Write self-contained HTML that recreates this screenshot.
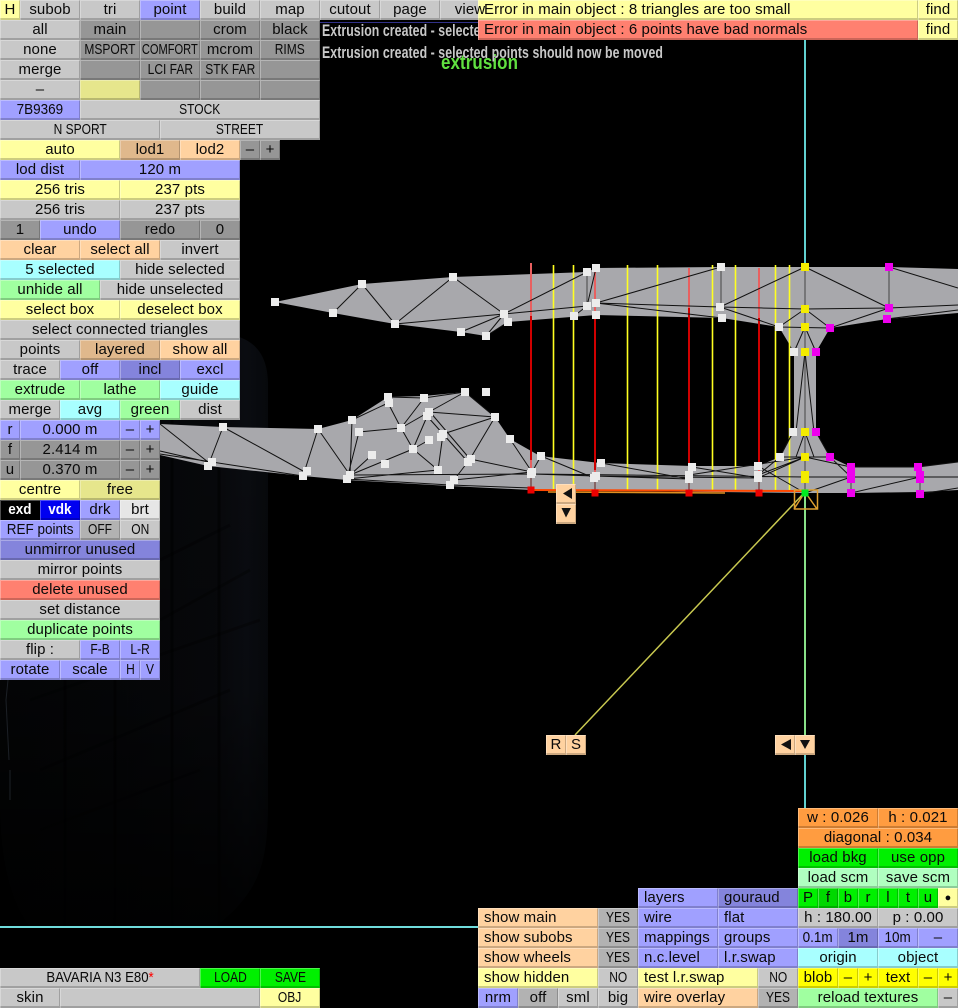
<!DOCTYPE html>
<html><head><meta charset="utf-8"><style>
html,body{margin:0;padding:0;background:#000;width:958px;height:1008px;overflow:hidden}
#w{position:relative;width:958px;height:1008px;overflow:hidden;background:#000;font:15px "Liberation Sans",sans-serif;letter-spacing:.1px;color:#0a0a0a;filter:blur(.35px)}
svg{position:absolute;left:0;top:0}
#w div{position:absolute;height:20px;line-height:20px;text-align:center;white-space:nowrap;box-sizing:border-box;box-shadow:inset 1px 1px 0 rgba(255,255,255,.3),inset -1px -2px 0 rgba(0,0,0,.2)}
#w div.l{text-align:left;padding-left:6px}
#w span.x{display:inline-block;transform:scaleX(.8);letter-spacing:0;margin:0 -12px}
#w span.z{display:inline-block;transform:scaleX(.9);letter-spacing:0;margin:0 -12px}
.g{background:#c8c8c8}.d{background:#969696}.b{background:#a0a0ff}.B{background:#8484dc}.y{background:#ffffa0}.k{background:#e6e68c}.p{background:#ffd2a0}.P{background:#e0b88c}.c{background:#a8ffff}.n{background:#a0ffa0}.r{background:#ff8070}.o{background:#ff9c40}.G{background:#00f000}.m{background:#b0ffc0}.Y{background:#ffff00}.s{background:#b2b2b2}
.v{background:#00d800}
</style></head><body><div id="w">
<svg width="958" height="1008" viewBox="0 0 958 1008">
<defs><linearGradient id="t" x1="0" x2="1" y1="0" y2="0"><stop offset="0" stop-color="#040506"/><stop offset=".45" stop-color="#050608"/><stop offset=".8" stop-color="#07080b"/><stop offset=".92" stop-color="#0a0c11"/><stop offset="1" stop-color="#07090c"/></linearGradient>
<linearGradient id="f" x1="0" x2="0" y1="0" y2="1"><stop offset="0" stop-color="#000" stop-opacity="0"/><stop offset=".6" stop-color="#000" stop-opacity=".1"/><stop offset=".9" stop-color="#000" stop-opacity=".7"/><stop offset="1" stop-color="#000" stop-opacity=".85"/></linearGradient></defs>
<path d="M0 335H232C255 340 268 355 268 385V800C268 860 262 890 215 927H30C10 900 0 860 0 800Z" fill="url(#t)"/>
<path d="M65 400V927M115 400V927M172 400V927M219 400V927" stroke="#000" stroke-width="3" opacity=".5"/>
<path d="M160 560L230 525M160 620L250 570M30 700L260 620M40 770L230 690M40 830L200 770" stroke="#000" stroke-width="3" opacity=".3"/>
<path d="M0 335H268V927H0Z" fill="url(#f)"/>
<path d="M10 660L6 700L9 760M10 770V800" stroke="#1c2026" fill="none"/>
<rect x="0" y="926" width="478" height="2" fill="#70dcdc"/>
<path d="M805 40V490" stroke="#60d0d0" stroke-width="2"/>
<path d="M805 495V735" stroke="#88e088" stroke-width="2"/>
<path d="M805 755V808" stroke="#60d0d0" stroke-width="2"/>
<path d="M805 492L575 735" stroke="#c8c850" stroke-width="1.5"/>
<rect x="320" y="22" width="158" height="1" fill="#303088"/>
<text x="441" y="69" textLength="77" lengthAdjust="spacingAndGlyphs" font-family="Liberation Sans" font-weight="bold" font-size="20" fill="#60e040">extrusion</text>
<text x="322" y="36" textLength="341" lengthAdjust="spacingAndGlyphs" font-family="Liberation Sans" font-weight="bold" font-size="17" fill="#c8c8c8">Extrusion created - selected points should now be moved</text>
<text x="322" y="58" textLength="341" lengthAdjust="spacingAndGlyphs" font-family="Liberation Sans" font-weight="bold" font-size="17" fill="#c8c8c8">Extrusion created - selected points should now be moved</text>
<!-- grey surfaces -->
<path d="M275 302L362 284L453 277L587 272L596 268L721 267L805 267L889 267L958 269V313L887 319L830 328L816 352L816 432L830 457L851 467L918 467L958 462V490L920 492L851 493L805 493L531 490L450 486L347 480L303 476L208 466L160 455V424L223 427L318 429L352 420L388 397L424 396L465 392L495 417L510 439L540 456L600 463L692 466L758 466L780 457L794 432L794 352L779 327L722 318L596 315L508 322L486 336L461 332L395 324L333 313Z" fill="#a8a8ac"/>
<!-- vertical guide lines -->
<path d="M531 263V490M595 268V493M689 268V493M759 268V493" stroke="#d00000" stroke-width="2"/>
<path d="M531 263V316M595 268V316M689 268V308M759 268V318M531 460V488M595 470V490M689 470V490M759 470V490" stroke="#e86060" stroke-width="2"/>
<path d="M553.5 265V490M573.5 265V490M627.5 265V490M657.5 265V490M712.5 265V490M735.5 265V490M775.5 265V490M789.5 265V490" stroke="#ffff20" stroke-width="1.6"/>
<!-- grey edges -->
<path d="M587 272V306M721 267V307M805 267V309M889 267V308M805 309V352M805 352V493M531 474V490M595 478V493M689 479V493M759 478V493M851 467V493M920 477V494" stroke="#666" stroke-width="1.500" fill="none"/>
<!-- black edges -->
<path d="M362 284L333 313M362 284L395 324M395 324L453 277M453 277L504 314M395 324L504 314M504 314L461 332M504 314L486 336M508 322L486 336M504 314L587 272M504 314L587 306M596 268L587 306M574 316L587 306M596 303L721 267M596 303L720 307M596 303L722 318M720 307L805 267M720 307L805 309M720 307L779 327M805 267L889 308M805 309L889 308M779 327L805 309M805 309L830 328M779 327L830 328M830 328L889 308M889 267L958 288M889 308L958 305M887 319L958 310M805 327L794 352M805 327L816 352M805 352L796 432M805 352L814 432M793 432L780 457M816 432L830 457M805 432L796 457M805 432L814 457M780 457L830 457" stroke="#111" fill="none"/>
<path d="M160 424L208 462M223 427L208 466M223 427L303 471M318 429L303 476M318 429L350 475M352 420L350 475M359 432L347 479M352 420L388 403M359 432L401 428M388 403L401 428M388 397L424 398L465 392M401 428L429 412M424 398L401 428M465 392L429 412M429 412L495 417M465 392L495 417M495 417L443 434M429 412L413 449M401 428L413 449M413 449L350 475M372 455L350 475M429 440L413 449M413 449L438 470M443 434L438 470M438 470L347 479M430 412L470 459M427 416L468 462M495 417L470 459M510 439L532 472M470 459L532 472M470 459L454 480M454 480L532 472M443 434L495 417M347 479L450 485M350 475L531 474M450 485L531 488M160 454L303 476M160 451L208 462M532 472L541 456M541 456L594 478M532 474L689 479M596 476L759 478M601 463L689 479M692 467L759 478M758 466L805 493M780 457L758 475M805 457L758 475M805 457L758 478M805 457L689 475M805 457L851 467M830 457L851 477M805 493L851 477M851 477L920 477M851 467L918 467M851 493L920 477M920 494L958 488M920 477L958 477M918 467L958 462M531 474L805 477M805 477L851 477" stroke="#111" fill="none"/>
<!-- selection / orange -->
<path d="M531 490L805 491" stroke="#ff4800" stroke-width="2"/>
<path d="M548 492L725 493" stroke="#e09020" stroke-width="1.500"/>
<path d="M794.500 490H817.500V509H794.500ZM805 492L817 509M805 492L794 509" stroke="#e0a030" stroke-width="1.500" fill="none"/>
<!-- vertices -->
<path d="M275 302h.01M362 284h.01M333 313h.01M395 324h.01M453 277h.01M504 314h.01M508 322h.01M461 332h.01M486 336h.01M574 316h.01M587 272h.01M596 268h.01M587 306h.01M596 303h.01M596 315h.01M721 267h.01M720 307h.01M722 318h.01M779 327h.01M794 352h.01M793 432h.01M780 457h.01M223 427h.01M318 429h.01M352 420h.01M359 432h.01M388 397h.01M389 403h.01M424 398h.01M465 392h.01M486 392h.01M495 417h.01M510 439h.01M429 412h.01M427 416h.01M401 428h.01M372 455h.01M385 464h.01M413 449h.01M429 440h.01M443 434h.01M441 437h.01M471 459h.01M468 462h.01M438 470h.01M454 480h.01M450 485h.01M212 462h.01M208 466h.01M307 471h.01M303 476h.01M350 475h.01M347 479h.01M541 456h.01M532 472h.01M531 474h.01M601 463h.01M596 476h.01M594 478h.01M692 467h.01M689 475h.01M689 479h.01M758 466h.01M758 475h.01M758 478h.01" stroke="#ececec" stroke-width="8" stroke-linecap="square"/>
<path d="M805 267h.01M805 309h.01M805 327h.01M805 352h.01M805 432h.01M805 457h.01M805 475h.01M805 479h.01" stroke="#f4ec00" stroke-width="8" stroke-linecap="square"/>
<path d="M889 267h.01M889 308h.01M887 319h.01M830 328h.01M816 352h.01M816 432h.01M830 457h.01M851 467h.01M851 475h.01M851 479h.01M851 493h.01M918 467h.01M920 475h.01M920 479h.01M920 494h.01" stroke="#ee00ee" stroke-width="8" stroke-linecap="square"/>
<path d="M531 490h.01M595 493h.01M689 493h.01M759 493h.01" stroke="#ec0000" stroke-width="7" stroke-linecap="square"/>
<path d="M805 493h.01" stroke="#00ec20" stroke-width="7" stroke-linecap="square"/>
</svg>

<div class="y" style="left:0;top:0;width:20px">H</div><div class="g" style="left:20px;top:0;width:60px">subob</div><div class="g" style="left:80px;top:0;width:60px">tri</div><div class="b" style="left:140px;top:0;width:60px">point</div><div class="g" style="left:200px;top:0;width:60px">build</div><div class="g" style="left:260px;top:0;width:60px">map</div><div class="g" style="left:320px;top:0;width:60px">cutout</div><div class="g" style="left:380px;top:0;width:60px">page</div><div class="g" style="left:440px;top:0;width:60px"></div>
<div class="g" style="left:0;top:20px;width:80px">all</div><div class="d" style="left:80px;top:20px;width:60px">main</div><div class="d" style="left:140px;top:20px;width:60px"></div><div class="d" style="left:200px;top:20px;width:60px">crom</div><div class="d" style="left:260px;top:20px;width:60px">black</div>
<div class="g" style="left:0;top:40px;width:80px">none</div><div class="d" style="left:80px;top:40px;width:60px"><span class="x">MSPORT</span></div><div class="d" style="left:140px;top:40px;width:60px"><span class="x" style="transform:scaleX(.74)">COMFORT</span></div><div class="d" style="left:200px;top:40px;width:60px">mcrom</div><div class="d" style="left:260px;top:40px;width:60px"><span class="x">RIMS</span></div>
<div class="g" style="left:0;top:60px;width:80px">merge</div><div class="d" style="left:80px;top:60px;width:60px"></div><div class="d" style="left:140px;top:60px;width:60px"><span class="x">LCI FAR</span></div><div class="d" style="left:200px;top:60px;width:60px"><span class="x">STK FAR</span></div><div class="d" style="left:260px;top:60px;width:60px"></div>
<div class="g" style="left:0;top:80px;width:80px">–</div><div class="k" style="left:80px;top:80px;width:60px"></div><div class="d" style="left:140px;top:80px;width:60px"></div><div class="d" style="left:200px;top:80px;width:60px"></div><div class="d" style="left:260px;top:80px;width:60px"></div>
<div class="b" style="left:0;top:100px;width:80px"><span class="z">7B9369</span></div><div class="g" style="left:80px;top:100px;width:240px"><span class="x">STOCK</span></div>
<div class="g" style="left:0;top:120px;width:160px"><span class="x">N SPORT</span></div><div class="g" style="left:160px;top:120px;width:160px"><span class="x">STREET</span></div>
<div class="y" style="left:0;top:140px;width:120px">auto</div><div class="P" style="left:120px;top:140px;width:60px">lod1</div><div class="p" style="left:180px;top:140px;width:60px">lod2</div><div class="d" style="left:240px;top:140px;width:20px">–</div><div class="d" style="left:260px;top:140px;width:20px">+</div>
<div class="b" style="left:0;top:160px;width:80px">lod dist</div><div class="b" style="left:80px;top:160px;width:160px">120 m</div>
<div class="y" style="left:0;top:180px;width:120px">256 tris</div><div class="y" style="left:120px;top:180px;width:120px">237 pts</div>
<div class="g" style="left:0;top:200px;width:120px">256 tris</div><div class="g" style="left:120px;top:200px;width:120px">237 pts</div>
<div class="d" style="left:0;top:220px;width:40px">1</div><div class="b" style="left:40px;top:220px;width:80px">undo</div><div class="d" style="left:120px;top:220px;width:80px">redo</div><div class="d" style="left:200px;top:220px;width:40px">0</div>
<div class="p" style="left:0;top:240px;width:80px">clear</div><div class="p" style="left:80px;top:240px;width:80px">select all</div><div class="g" style="left:160px;top:240px;width:80px">invert</div>
<div class="c" style="left:0;top:260px;width:120px">5 selected</div><div class="g" style="left:120px;top:260px;width:120px">hide selected</div>
<div class="n" style="left:0;top:280px;width:100px">unhide all</div><div class="g" style="left:100px;top:280px;width:140px">hide unselected</div>
<div class="y" style="left:0;top:300px;width:120px">select box</div><div class="y" style="left:120px;top:300px;width:120px">deselect box</div>
<div class="g" style="left:0;top:320px;width:240px">select connected triangles</div>
<div class="g" style="left:0;top:340px;width:80px">points</div><div class="P" style="left:80px;top:340px;width:80px">layered</div><div class="p" style="left:160px;top:340px;width:80px">show all</div>
<div class="g" style="left:0;top:360px;width:60px">trace</div><div class="b" style="left:60px;top:360px;width:60px">off</div><div class="B" style="left:120px;top:360px;width:60px">incl</div><div class="b" style="left:180px;top:360px;width:60px">excl</div>
<div class="n" style="left:0;top:380px;width:80px">extrude</div><div class="n" style="left:80px;top:380px;width:80px">lathe</div><div class="c" style="left:160px;top:380px;width:80px">guide</div>
<div class="g" style="left:0;top:400px;width:60px">merge</div><div class="c" style="left:60px;top:400px;width:60px">avg</div><div class="n" style="left:120px;top:400px;width:60px">green</div><div class="g" style="left:180px;top:400px;width:60px">dist</div>
<div class="b" style="left:0;top:420px;width:20px">r</div><div class="b" style="left:20px;top:420px;width:100px">0.000 m</div><div class="b" style="left:120px;top:420px;width:20px">–</div><div class="b" style="left:140px;top:420px;width:20px">+</div>
<div class="d" style="left:0;top:440px;width:20px">f</div><div class="d" style="left:20px;top:440px;width:100px">2.414 m</div><div class="d" style="left:120px;top:440px;width:20px">–</div><div class="d" style="left:140px;top:440px;width:20px">+</div>
<div class="d" style="left:0;top:460px;width:20px">u</div><div class="d" style="left:20px;top:460px;width:100px">0.370 m</div><div class="d" style="left:120px;top:460px;width:20px">–</div><div class="d" style="left:140px;top:460px;width:20px">+</div>
<div class="y" style="left:0;top:480px;width:80px">centre</div><div class="k" style="left:80px;top:480px;width:80px">free</div>
<div style="left:0;top:500px;width:40px;background:#000;color:#fff;font-weight:bold"><span class="z">exd</span></div><div style="left:40px;top:500px;width:40px;background:#0000f0;color:#fff;font-weight:bold"><span class="z">vdk</span></div><div class="b" style="left:80px;top:500px;width:40px">drk</div><div style="left:120px;top:500px;width:40px;background:#e6e6e6">brt</div>
<div class="b" style="left:0;top:520px;width:80px"><span class="z">REF points</span></div><div class="s" style="left:80px;top:520px;width:40px"><span class="x">OFF</span></div><div class="g" style="left:120px;top:520px;width:40px"><span class="x">ON</span></div>
<div class="B" style="left:0;top:540px;width:160px">unmirror unused</div>
<div class="g" style="left:0;top:560px;width:160px">mirror points</div>
<div class="r" style="left:0;top:580px;width:160px">delete unused</div>
<div class="g" style="left:0;top:600px;width:160px">set distance</div>
<div class="n" style="left:0;top:620px;width:160px">duplicate points</div>
<div class="g" style="left:0;top:640px;width:80px">flip :</div><div class="b" style="left:80px;top:640px;width:40px"><span class="x">F-B</span></div><div class="b" style="left:120px;top:640px;width:40px"><span class="x">L-R</span></div>
<div class="b" style="left:0;top:660px;width:60px">rotate</div><div class="b" style="left:60px;top:660px;width:60px">scale</div><div class="b" style="left:120px;top:660px;width:20px"><span class="x">H</span></div><div class="b" style="left:140px;top:660px;width:20px"><span class="x">V</span></div>

<div class="y l" style="left:478px;top:0;width:440px">Error in main object : 8 triangles are too small</div><div class="y" style="left:918px;top:0;width:40px">find</div>
<div class="r l" style="left:478px;top:20px;width:440px">Error in main object : 6 points have bad normals</div><div class="y" style="left:918px;top:20px;width:40px">find</div>
<div style="left:440px;top:0;width:60px;box-shadow:none">view</div>

<div class="p" style="left:556px;top:484px;width:20px"><svg width="20" height="20"><path d="M7 9.500L16 4V15Z" fill="#111"/></svg></div><div class="p" style="left:556px;top:504px;width:20px"><svg width="20" height="20"><path d="M5.500 4H15L10 13.500Z" fill="#111"/></svg></div>
<div class="p" style="left:546px;top:735px;width:20px">R</div><div class="p" style="left:566px;top:735px;width:20px">S</div>
<div class="p" style="left:775px;top:735px;width:20px"><svg width="20" height="20"><path d="M6 9.500L16 4V15Z" fill="#111"/></svg></div><div class="p" style="left:795px;top:735px;width:20px"><svg width="20" height="20"><path d="M5 5H15L10 14Z" fill="#111"/></svg></div>

<div class="o" style="left:798px;top:808px;width:80px">w : 0.026</div><div class="o" style="left:878px;top:808px;width:80px">h : 0.021</div>
<div class="o" style="left:798px;top:828px;width:160px">diagonal : 0.034</div>
<div class="G" style="left:798px;top:848px;width:80px">load bkg</div><div class="G" style="left:878px;top:848px;width:80px">use opp</div>
<div class="m" style="left:798px;top:868px;width:80px">load scm</div><div class="m" style="left:878px;top:868px;width:80px">save scm</div>
<div class="G" style="left:798px;top:888px;width:20px">P</div><div class="v" style="left:818px;top:888px;width:20px">f</div><div class="G" style="left:838px;top:888px;width:20px">b</div><div class="G" style="left:858px;top:888px;width:20px">r</div><div class="G" style="left:878px;top:888px;width:20px">l</div><div class="G" style="left:898px;top:888px;width:20px">t</div><div class="G" style="left:918px;top:888px;width:20px">u</div><div class="y" style="left:938px;top:888px;width:20px;font-size:11px">●</div>
<div class="g" style="left:798px;top:908px;width:80px">h : 180.00</div><div class="g" style="left:878px;top:908px;width:80px">p : 0.00</div>
<div class="b" style="left:798px;top:928px;width:40px"><span class="z">0.1m</span></div><div class="B" style="left:838px;top:928px;width:40px">1m</div><div class="b" style="left:878px;top:928px;width:40px"><span class="z">10m</span></div><div class="b" style="left:918px;top:928px;width:40px">–</div>
<div class="c" style="left:798px;top:948px;width:80px">origin</div><div class="c" style="left:878px;top:948px;width:80px">object</div>
<div class="Y" style="left:798px;top:968px;width:40px">blob</div><div class="Y" style="left:838px;top:968px;width:20px">–</div><div class="Y" style="left:858px;top:968px;width:20px">+</div><div class="Y" style="left:878px;top:968px;width:40px">text</div><div class="Y" style="left:918px;top:968px;width:20px">–</div><div class="Y" style="left:938px;top:968px;width:20px">+</div>
<div class="n" style="left:798px;top:988px;width:140px">reload textures</div><div class="g" style="left:938px;top:988px;width:20px">–</div>

<div class="b l" style="left:638px;top:888px;width:80px">layers</div><div class="B l" style="left:718px;top:888px;width:80px">gouraud</div>
<div class="b l" style="left:638px;top:908px;width:80px">wire</div><div class="b l" style="left:718px;top:908px;width:80px">flat</div>
<div class="b l" style="left:638px;top:928px;width:80px">mappings</div><div class="b l" style="left:718px;top:928px;width:80px">groups</div>
<div class="b l" style="left:638px;top:948px;width:80px">n.c.level</div><div class="b l" style="left:718px;top:948px;width:80px">l.r.swap</div>
<div class="y l" style="left:638px;top:968px;width:120px">test l.r.swap</div><div class="g" style="left:758px;top:968px;width:40px"><span class="x">NO</span></div>
<div class="p l" style="left:638px;top:988px;width:120px">wire overlay</div><div class="s" style="left:758px;top:988px;width:40px"><span class="x">YES</span></div>

<div class="p l" style="left:478px;top:908px;width:120px">show main</div><div class="s" style="left:598px;top:908px;width:40px"><span class="x">YES</span></div>
<div class="p l" style="left:478px;top:928px;width:120px">show subobs</div><div class="s" style="left:598px;top:928px;width:40px"><span class="x">YES</span></div>
<div class="p l" style="left:478px;top:948px;width:120px">show wheels</div><div class="s" style="left:598px;top:948px;width:40px"><span class="x">YES</span></div>
<div class="y l" style="left:478px;top:968px;width:120px">show hidden</div><div class="g" style="left:598px;top:968px;width:40px"><span class="x">NO</span></div>
<div class="b" style="left:478px;top:988px;width:40px">nrm</div><div class="s" style="left:518px;top:988px;width:40px">off</div><div class="g" style="left:558px;top:988px;width:40px">sml</div><div class="g" style="left:598px;top:988px;width:40px">big</div>

<div class="g" style="left:0;top:968px;width:200px"><span class="x" style="transform:scaleX(.88)">BAVARIA N3 E80<span style="color:#f00">*</span></span></div><div class="G" style="left:200px;top:968px;width:60px"><span class="x">LOAD</span></div><div class="G" style="left:260px;top:968px;width:60px"><span class="x">SAVE</span></div>
<div class="g" style="left:0;top:988px;width:60px">skin</div><div class="g" style="left:60px;top:988px;width:200px"></div><div class="y" style="left:260px;top:988px;width:60px"><span class="x">OBJ</span></div>
</div></body></html>
